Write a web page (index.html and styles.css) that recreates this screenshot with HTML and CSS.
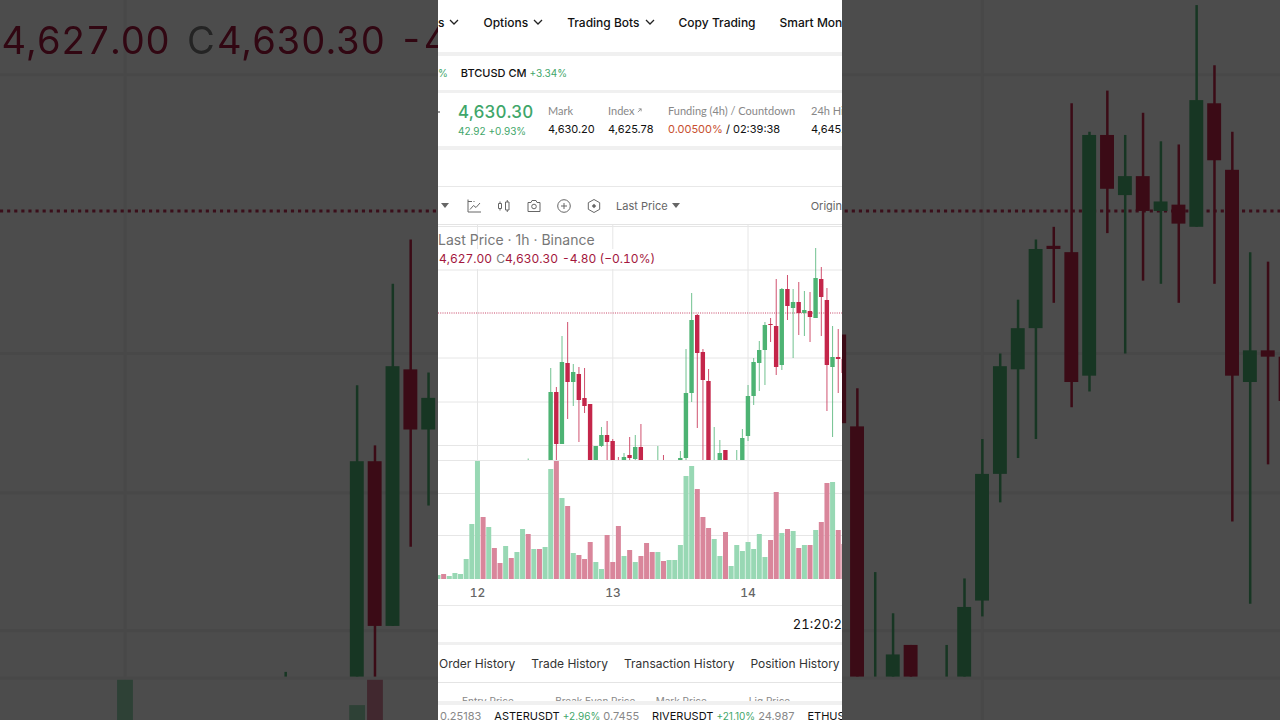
FILE: index.html
```html
<!DOCTYPE html>
<html lang="en">
<head>
    <meta charset="UTF-8">
    <meta name="viewport" content="width=device-width, initial-scale=1.0">
    <title>Futures Trading</title>
    <link rel="stylesheet" href="styles.css">
</head>
<body>
    <div class="page">
        <!-- Enlarged, dimmed chart on the left -->
        <div class="backdrop">
            <svg class="chart-zoom" viewBox="0 21.4 138.3 227.3" preserveAspectRatio="xMinYMid slice">
                <g class="plot"></g>
                <text class="zoom-price" x="0.5" y="38.5"><tspan>4,627.00</tspan><tspan class="muted" x="59">C</tspan><tspan x="68.5">4,630.30</tspan><tspan x="126">-4</tspan></text>
            </svg>
        </div>

        <main class="phone">
            <nav class="main-nav">
                <button class="nav-item">s <svg class="chevron" viewBox="0 0 10 6"><path d="M1 1l4 4 4-4"/></svg></button>
                <button class="nav-item">Options <svg class="chevron" viewBox="0 0 10 6"><path d="M1 1l4 4 4-4"/></svg></button>
                <button class="nav-item">Trading Bots <svg class="chevron" viewBox="0 0 10 6"><path d="M1 1l4 4 4-4"/></svg></button>
                <a class="nav-item" href="#">Copy Trading</a>
                <a class="nav-item" href="#">Smart Mon</a>
            </nav>

            <div class="pairs">
                <span class="up">%</span>
                <a href="#">BTCUSD CM <span class="up">+3.34%</span></a>
            </div>

            <section class="stats">
                <span class="edge-caret"></span>
                <div class="stat last">
                    <strong class="up">4,630.30</strong>
                    <span class="up">42.92 +0.93%</span>
                </div>
                <div class="stat">
                    <span class="label">Mark</span>
                    <span>4,630.20</span>
                </div>
                <div class="stat">
                    <span class="label">Index <svg class="arrow" viewBox="0 0 6 6"><path d="M1 5l4-4M2 1h3v3"/></svg></span>
                    <span>4,625.78</span>
                </div>
                <div class="stat">
                    <span class="label">Funding (4h) / Countdown</span>
                    <span><span class="funding">0.00500%</span> / 02:39:38</span>
                </div>
                <div class="stat">
                    <span class="label">24h Hi</span>
                    <span>4,645.</span>
                </div>
            </section>

            <div class="spacer"></div>

            <div class="toolbar">
                <svg class="caret" viewBox="0 0 8 5"><path d="M0 0h8L4 5z"/></svg>
                <button class="tool" aria-label="Indicators">
                    <svg viewBox="0 0 16 16"><path d="M2 1.5V14h13M4 11.5l3.5-4L10 9.500 14 5M2 3.500h4M7.500 3.500h1"/></svg>
                </button>
                <button class="tool" aria-label="Chart type">
                    <svg viewBox="0 0 16 16"><path d="M2.500 5.500h3v5h-3zM4 3.500v2M4 10.500v2M9.500 4h3.500v8H9.500zM11.250 2v2M11.250 12v2"/></svg>
                </button>
                <button class="tool" aria-label="Snapshot">
                    <svg viewBox="0 0 16 16"><path d="M2 4.500h3l1-2h4l1 2h3v9H2z"/><circle cx="8" cy="8.500" r="2.300"/></svg>
                </button>
                <button class="tool" aria-label="Add">
                    <svg viewBox="0 0 16 16"><circle cx="8" cy="8" r="6.300"/><path d="M8 5v6M5 8h6"/></svg>
                </button>
                <button class="tool" aria-label="Settings">
                    <svg viewBox="0 0 16 16"><path d="M8 1.500l5.700 3.200v6.600L8 14.500l-5.700-3.200V4.700z"/><path class="solid" d="M8 5.800L10.200 8 8 10.200 5.800 8z"/></svg>
                </button>
                <div class="price-type">
                    <select aria-label="Price type">
                        <option>Last Price</option>
                    </select>
                    <svg class="caret" viewBox="0 0 8 5"><path d="M0 0h8L4 5z"/></svg>
                </div>
                <button class="view">Origin</button>
            </div>

            <section class="chart">
                <svg class="chart-main" viewBox="0 0 404 380">
                    <g class="plot"></g>
                    <g class="dates">
                        <text x="39.5" y="372">12</text>
                        <text x="175" y="372">13</text>
                        <text x="310" y="372">14</text>
                    </g>
                </svg>
                <div class="legend">
                    <div class="legend-title">Last Price · 1h · Binance</div>
                    <div class="legend-values">
                        <span>4,627.00</span>
                        <span><span class="muted">C</span>4,630.30</span>
                        <span>-4.80 (−0.10%)</span>
                    </div>
                </div>
            </section>

            <div class="clock"><time>21:20:2</time></div>

            <div class="tabs">
                <button>Order History</button>
                <button>Trade History</button>
                <button>Transaction History</button>
                <button>Position History</button>
            </div>

            <div class="positions">
                <table>
                    <tr>
                        <th>Entry Price</th>
                        <th class="wide">Break Even Price</th>
                        <th>Mark Price</th>
                        <th>Liq.Price</th>
                    </tr>
                </table>
            </div>

            <footer class="ticker">
                <span class="quote">0.25183</span>
                <a href="#">ASTERUSDT <span class="up">+2.96%</span> <span class="quote">0.7455</span></a>
                <a href="#">RIVERUSDT <span class="up">+21.10%</span> <span class="quote">24.987</span></a>
                <a href="#">ETHUS</a>
            </footer>
        </main>

        <!-- Enlarged, dimmed chart on the right -->
        <div class="backdrop">
            <svg class="chart-zoom" viewBox="265.7 21.4 138.3 227.3" preserveAspectRatio="xMaxYMid slice">
                <g class="plot"></g>
            </svg>
        </div>
    </div>

    <script src="chart.js"></script>
</body>
</html>
```
FILE: styles.css
```css
* {
    box-sizing: border-box;
}

body {
    margin: 0;
    font-family: Inter, "Liberation Sans", sans-serif;
    font-size: 11px;
    color: #111;
    background: #4c4c4c;
}

button, select {
    padding: 0;
    border: none;
    background: none;
    font: inherit;
    color: inherit;
    cursor: pointer;
}

a {
    color: inherit;
    text-decoration: none;
}

.page {
    display: grid;
    grid-template-columns: minmax(0, 438fr) minmax(0, 404fr) minmax(0, 438fr);
    height: 100vh;
    overflow: hidden;
}

.backdrop {
    overflow: hidden;
    background: #fff;
    filter: brightness(0.3);
}

.chart-zoom {
    display: block;
    width: 100%;
    height: 100vh;
}

.phone {
    display: flex;
    flex-direction: column;
    overflow: hidden;
    background: #fff;
    white-space: nowrap;
}

.phone > * {
    flex-shrink: 0;
}

.up {
    font-size: 10px;
    color: #3fa66a;
}

.muted {
    color: #777;
    fill: #777;
}

/* Top navigation */
.main-nav {
    display: flex;
    align-items: center;
    gap: 24px;
    height: 56px;
    padding-bottom: 8px;
    border-bottom: 4px solid #f0f0f0;
    font-size: 12px;
    font-weight: 500;
    overflow: hidden;
}

.nav-item {
    display: flex;
    flex-shrink: 0;
    align-items: center;
    gap: 5px;
}

.chevron {
    width: 10px;
    height: 6px;
    fill: none;
    stroke: #222;
    stroke-width: 1.3;
}

.pairs {
    display: flex;
    align-items: center;
    gap: 13px;
    height: 37px;
    border-bottom: 3px solid #f0f0f0;
    font-weight: 500;
}

.pairs .up {
    font-weight: 400;
}

/* Price summary */
.stats {
    display: grid;
    grid-template-columns: 20fr 90fr 60fr 60fr 143fr 31fr;
    align-items: center;
    height: 57px;
    border-bottom: 4px solid #f0f0f0;
}

.stat {
    display: flex;
    flex-direction: column;
    min-width: 0;
    line-height: 19px;
}

.last {
    line-height: 16px;
}

.last strong {
    font-size: 17px;
    font-weight: 500;
    line-height: 22px;
    font-variant-numeric: tabular-nums;
}

.label {
    font-family: Lato, "Liberation Sans", sans-serif;
    font-size: 11px;
    color: #888;
}

.arrow {
    width: 5px;
    height: 5px;
    vertical-align: 2px;
    fill: none;
    stroke: #888;
}

.funding {
    color: #c8502f;
}

.edge-caret {
    width: 2px;
    height: 2px;
    margin-bottom: 16px;
    background: #999;
}

.spacer {
    height: 37px;
    border-bottom: 1px solid #e8e8e8;
}

/* Chart toolbar */
.toolbar {
    display: flex;
    align-items: center;
    gap: 14px;
    height: 38px;
    padding-left: 3px;
    border-bottom: 1px solid #e4e4e4;
    color: #666;
}

.caret {
    width: 8px;
    height: 5px;
    fill: #666;
}

.toolbar > .caret {
    margin-right: 3px;
}

.tool {
    flex-shrink: 0;
    width: 16px;
    height: 16px;
}

.tool svg {
    display: block;
    fill: none;
    stroke: #666;
}

.tool .solid {
    fill: #666;
    stroke: none;
}

.price-type {
    display: flex;
    align-items: center;
    gap: 4px;
}

.price-type select {
    appearance: none;
}

.view {
    margin-left: auto;
}

/* Candles and volume */
.chart {
    position: relative;
    border-bottom: 1px solid #e8e8e8;
}

.chart-main {
    display: block;
    width: 100%;
}

.grid {
    stroke: #e6e6e6;
}

.chart-zoom .grid {
    stroke: #efefef;
}

.price-line {
    stroke: #c22f55;
    stroke-dasharray: 1 1.24;
}

.candle-up {
    fill: #4db373;
    stroke: #4db373;
}

.candle-down {
    fill: #c4264a;
    stroke: #c4264a;
}

.volume-up {
    fill: #98d8b4;
}

.volume-down {
    fill: #d9869b;
}

.dates text {
    font-size: 12px;
    font-weight: 500;
    font-variant-numeric: tabular-nums;
    fill: #666;
    text-anchor: middle;
}

.zoom-price {
    font-size: 12px;
    font-variant-numeric: tabular-nums;
    fill: #a3173d;
}

.legend {
    position: absolute;
    top: 6px;
    left: 0;
}

.legend-title {
    font-size: 14px;
    line-height: 18px;
    color: #777;
}

.legend-values {
    display: flex;
    gap: 4px;
    padding-left: 1px;
    background: #fff;
    font-size: 12px;
    font-variant-numeric: tabular-nums;
    line-height: 20px;
    color: #a3173d;
}

.clock {
    height: 39px;
    border-bottom: 3px solid #f0f0f0;
    font-size: 13px;
    font-variant-numeric: tabular-nums;
    line-height: 36px;
    text-align: right;
}

/* Order history */
.tabs {
    display: flex;
    gap: 16px;
    height: 38px;
    padding-left: 1px;
    border-bottom: 1px solid #e4e4e4;
    font-size: 12px;
    color: #333;
}

.tabs button {
    flex-shrink: 0;
}

.positions {
    height: 22px;
    padding-left: 24px;
    border-bottom: 4px solid #f0f0f0;
    overflow: hidden;
}

.positions table {
    width: 100%;
    border-collapse: collapse;
    table-layout: fixed;
}

.positions th {
    width: 25%;
    padding: 11px 0 0;
    font-size: 10px;
    font-weight: 400;
    line-height: 14px;
    text-align: left;
    color: #888;
}

.positions .wide {
    width: 27%;
}

.ticker {
    display: flex;
    gap: 13px;
    padding-left: 2px;
    line-height: 22px;
}

.quote {
    color: #888;
}
```
FILE: chart.js
```js
const STEP = 5.637;
const FLOOR = 235;
const VOLUME_BASE = 354;

// [slot, direction, body top, body bottom, high, low]
const candles = [
    [16, 'up', 235, 235, 233.5, 235],
    [20, 'up', 167, 235, 143, 235], [21, 'down', 167, 219, 162, 235],
    [22, 'up', 137, 219, 111, 219], [23, 'down', 138, 157, 97, 194],
    [24, 'up', 147, 157, 139, 181], [25, 'down', 149, 175, 142, 217],
    [26, 'down', 173, 181, 143, 188], [27, 'down', 179, 235, 179, 235],
    [28, 'up', 221, 235, 221, 235], [29, 'up', 210, 221, 202, 222],
    [30, 'down', 210, 217, 196, 235], [31, 'down', 216, 235, 214, 235],
    [32, 'down', 235, 235, 232, 235], [33, 'up', 232, 235, 228, 235],
    [34, 'down', 230, 233, 212, 235], [35, 'up', 222, 234, 210, 235],
    [36, 'down', 222, 235, 199, 235], [39, 'up', 235, 235, 221, 235],
    [40, 'down', 235, 235, 230, 235], [43, 'up', 233, 235, 226, 235],
    [44, 'up', 168, 233, 124, 235], [45, 'up', 95, 168, 68, 177],
    [46, 'down', 90, 128, 89, 203], [47, 'down', 127, 155, 124, 235],
    [48, 'down', 156, 235, 144, 235], [49, 'up', 235, 235, 202, 235],
    [50, 'up', 228, 235, 215, 235], [51, 'down', 225, 235, 225, 235],
    [53, 'up', 235, 235, 225, 235], [54, 'up', 213, 235, 204, 235],
    [55, 'up', 171, 211, 160, 216], [56, 'up', 137, 171, 133, 180],
    [57, 'up', 125, 138, 116, 166], [58, 'up', 100, 125, 97, 160],
    [59, 'down', 99, 100, 93, 117], [60, 'down', 101, 142, 54, 150],
    [61, 'up', 64, 140, 63, 145], [62, 'down', 64, 81, 50, 95],
    [63, 'up', 77, 83, 64, 133], [64, 'down', 77, 88, 57, 110],
    [65, 'up', 85, 88, 66, 111], [66, 'down', 86, 92, 67, 117],
    [67, 'up', 53, 93, 23, 93], [68, 'down', 54, 72, 42, 111],
    [69, 'down', 75, 140, 63, 186], [70, 'up', 132, 142, 101, 212],
    [71, 'down', 132, 134, 104, 168], [72, 'down', 134, 148, 134, 148]
];

// Top edge of each volume bar, one letter of the colour string per bar
const volumes = [
    350, 349, 351, 348, 349, 334, 299, 236, 292, 302, 323, 338, 321, 333, 327, 304,
    309, 324, 324, 322, 244, 236, 273, 281, 328, 330, 334, 317, 337, 344, 310, 337,
    301, 331, 325, 337, 331, 318, 327, 327, 336, 335, 335, 320, 251, 241, 264, 292,
    303, 314, 331, 307, 341, 320, 326, 317, 324, 309, 332, 315, 267, 308, 304, 306,
    323, 320, 320, 305, 297, 258, 257, 305, 319
];
const volumeColours =
    'grggggggrgrrgrggrgrggrgrgrrrggrrrgrgrrrg' +
    'rgggggrrrggrgggggggrrgrgrgrgrrgrr';

function line(cls, x1, y1, x2, y2, width) {
    return `<line class="${cls}" x1="${x1}" y1="${y1}" x2="${x2}" y2="${y2}" stroke-width="${width}"/>`;
}

function drawPlot() {
    let out = line('grid', 0, 1.5, 404, 1.5, 1);

    [45, 133, 177, 220.5, 235.5, 268.5, 310.5].forEach(y => {
        out += line('grid', 0, y, 404, y, 1);
    });
    [39.5, 174.8, 310].forEach(x => {
        out += line('grid', x, 0, x, VOLUME_BASE, 1);
    });

    volumes.forEach((top, i) => {
        const cls = volumeColours[i] === 'g' ? 'volume-up' : 'volume-down';
        out += `<rect class="${cls}" x="${i * STEP - 2.5}" y="${top}" width="5" height="${VOLUME_BASE - top}"/>`;
    });

    out += line('price-line', 0, 88, 404, 88, 0.9);

    candles.forEach(([slot, dir, top, bottom, high, low]) => {
        const x = slot * STEP;
        out += line('candle-' + dir, x, high, x, Math.min(low, FLOOR), 0.8);
        out += `<rect class="candle-${dir}" stroke-width="0" x="${x - 2.3}" y="${top}" width="4.4" height="${bottom - top}"/>`;
    });

    return out;
}

document.querySelectorAll('.plot').forEach(group => {
    group.innerHTML = drawPlot();
});
```
